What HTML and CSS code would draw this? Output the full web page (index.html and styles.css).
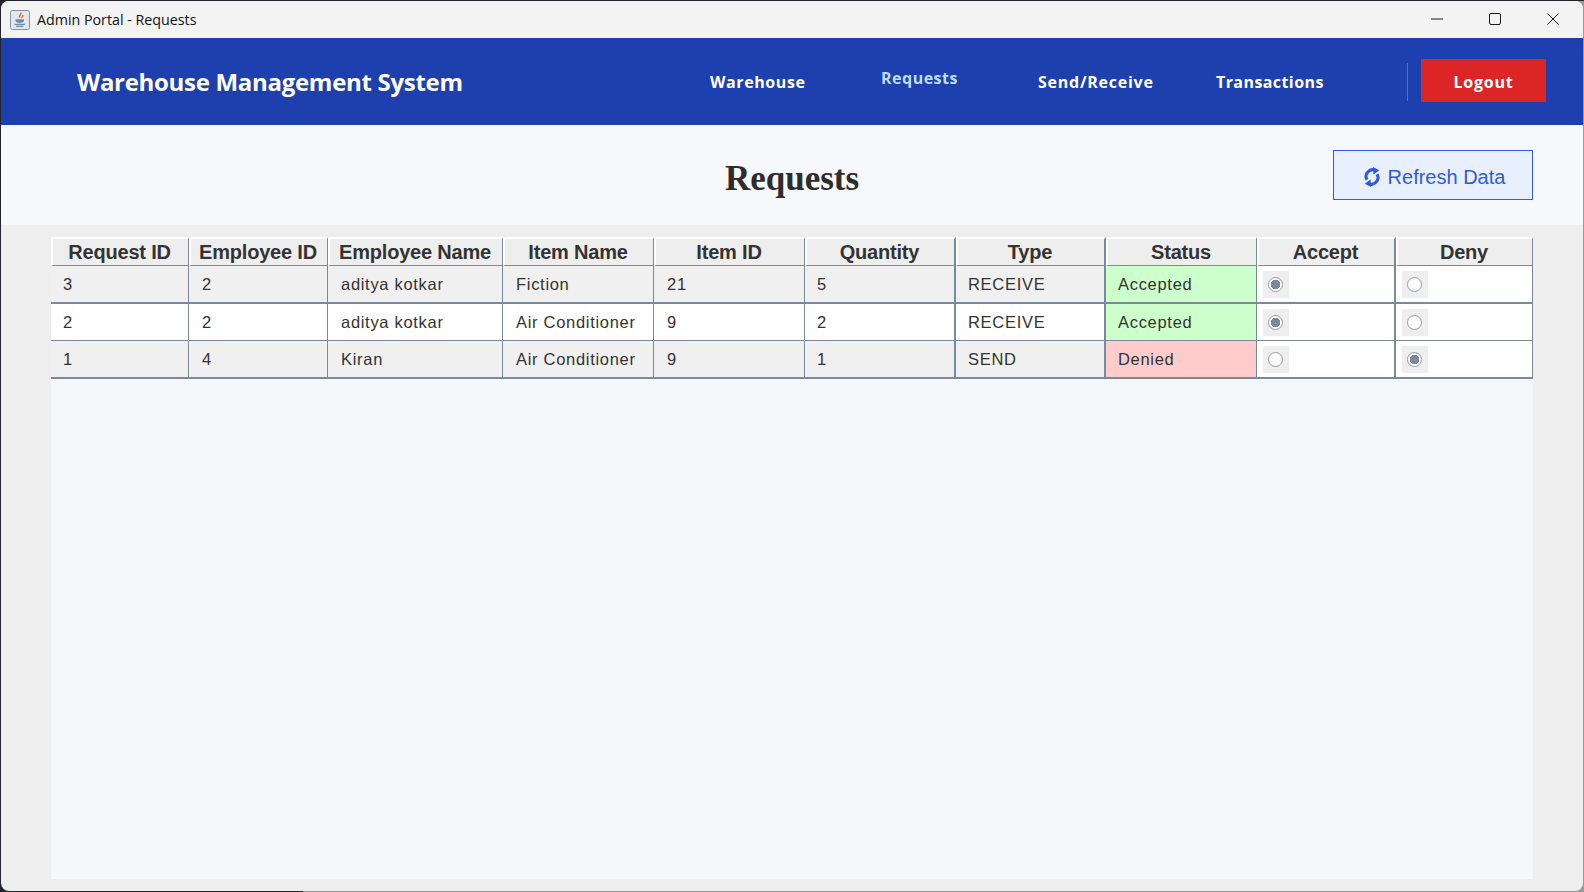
FILE: index.html
```html
<!DOCTYPE html>
<html lang="en">
<head>
<meta charset="utf-8">
<title>Admin Portal - Requests</title>
<link rel="stylesheet" href="styles.css">
</head>
<body>
<div class="window">
  <div class="titlebar">
    <svg class="app-icon" viewBox="0 0 20 20" width="20" height="20">
      <rect x="0.5" y="0.5" width="19" height="19" rx="2" fill="#e2e7ec" stroke="#7f94a8"/>
      <path d="M10.8 2.5c1.2 1.8-2.4 2.8-1.2 5.2M12.8 5c.6 1.2-1.4 1.6-.8 2.9" fill="none" stroke="#e2702a" stroke-width="1.6"/>
      <path d="M5.5 9.2h8.5v1.4c0 1.5-1.7 2.3-4.2 2.3s-4.3-.8-4.3-2.3z" fill="#6f8ba6"/>
      <path d="M4.5 14.3h10.5M6 16.3h7.5" stroke="#6f8ba6" stroke-width="1.2"/>
    </svg>
    <span class="title-text">Admin Portal - Requests</span>
    <div class="win-controls">
      <svg class="win-btn" viewBox="0 0 12 12" width="12" height="12"><path d="M0 6h12" stroke="#1a1a1a" fill="none"/></svg>
      <svg class="win-btn" viewBox="0 0 12 12" width="12" height="12"><rect x="0.5" y="0.5" width="11" height="11" rx="1.5" stroke="#1a1a1a" fill="none"/></svg>
      <svg class="win-btn" viewBox="0 0 12 12" width="12" height="12"><path d="M0.5 0.5l11 11M11.5 0.5l-11 11" stroke="#1a1a1a" fill="none"/></svg>
    </div>
  </div>

  <header class="appbar">
    <div class="brand">Warehouse Management System</div>
    <nav class="nav">
      <a class="nav-link nav-warehouse">Warehouse</a>
      <a class="nav-link nav-requests">Requests</a>
      <a class="nav-link nav-send">Send/Receive</a>
      <a class="nav-link nav-trans">Transactions</a>
    </nav>
    <div class="divider"></div>
    <button class="logout">Logout</button>
  </header>

  <div class="page-head">
    <h1 class="page-title">Requests</h1>
    <button class="refresh">
      <svg class="refresh-icon" viewBox="0 0 16 20" width="16" height="20">
        <path d="M12.4 4A6.6 6.6 0 0 0 3 12.8" fill="none" stroke="#2f5be0" stroke-width="3"/>
        <path d="M3.6 16A6.6 6.6 0 0 0 13 7.2" fill="none" stroke="#2f5be0" stroke-width="3"/>
        <path d="M9 0l0.5 7.5 5.8-4.2z" fill="#2f5be0"/>
        <path d="M7 20l-0.5-7.5-5.8 4.2z" fill="#2f5be0"/>
      </svg>
      <span>Refresh Data</span>
    </button>
  </div>

  <main class="content">
    <div class="table-panel">
      <table class="grid">
        <colgroup>
          <col class="c1"><col class="c2"><col class="c3"><col class="c4"><col class="c5">
          <col class="c6"><col class="c7"><col class="c8"><col class="c9"><col class="c10">
        </colgroup>
        <thead>
          <tr>
            <th>Request ID</th><th>Employee ID</th><th>Employee Name</th><th>Item Name</th><th>Item ID</th>
            <th class="thick">Quantity</th><th class="thick">Type</th><th>Status</th><th class="thick">Accept</th><th>Deny</th>
          </tr>
        </thead>
        <tbody>
          <tr class="row row-a row-thick">
            <td>3</td><td>2</td><td>aditya kotkar</td><td>Fiction</td><td>21</td><td class="thick">5</td><td class="thick">RECEIVE</td>
            <td class="ok">Accepted</td>
            <td class="white thick"><span class="radio-box"><span class="radio on"></span></span></td>
            <td class="white"><span class="radio-box"><span class="radio"></span></span></td>
          </tr>
          <tr class="row row-b">
            <td>2</td><td>2</td><td>aditya kotkar</td><td>Air Conditioner</td><td>9</td><td class="thick">2</td><td class="thick">RECEIVE</td>
            <td class="ok">Accepted</td>
            <td class="white thick"><span class="radio-box"><span class="radio on"></span></span></td>
            <td class="white"><span class="radio-box"><span class="radio"></span></span></td>
          </tr>
          <tr class="row row-a row-last">
            <td>1</td><td>4</td><td>Kiran</td><td>Air Conditioner</td><td>9</td><td class="thick">1</td><td class="thick">SEND</td>
            <td class="no">Denied</td>
            <td class="white thick"><span class="radio-box"><span class="radio"></span></span></td>
            <td class="white"><span class="radio-box"><span class="radio on"></span></span></td>
          </tr>
        </tbody>
      </table>
    </div>
  </main>
</div>
</body>
</html>
```
FILE: styles.css
```css
* { box-sizing: border-box; }
html, body { margin: 0; height: 100%; overflow: hidden; }
body {
  padding: 1px;
  background:
    linear-gradient(#23232b 0 1px, transparent 1px),
    linear-gradient(to right, #23232b 303px, #999999 303px);
}

.window {
  height: 890px;
  display: flex;
  flex-direction: column;
  background: #eeeeee;
  border-radius: 8px;
  overflow: hidden;
}

.titlebar {
  height: 37px;
  flex: none;
  display: flex;
  align-items: center;
  padding-left: 9px;
  background: #f3f3f3;
}
.app-icon { flex: none; }
.title-text {
  margin-left: 7px;
  font: 14.25px "Open Sans", "Noto Sans", sans-serif;
  color: #111;
}
.win-controls {
  margin-left: auto;
  display: flex;
  align-items: center;
  gap: 46px;
  padding: 0 24px 2px 0;
}
.win-btn { display: block; }

.appbar {
  height: 87px;
  flex: none;
  display: flex;
  align-items: center;
  background: #1e40af;
  padding-left: 76px;
  color: #fff;
}
.brand {
  font: 700 24px "Open Sans", "Noto Sans", sans-serif;
  letter-spacing: -0.3px;
  width: 633px;
}
.nav { display: flex; width: 705px; }
.nav-link {
  font: 700 16px "Open Sans", "Noto Sans", sans-serif;
  letter-spacing: 0.6px;
  color: #fff;
}
.nav-warehouse { width: 171px; }
.nav-requests { width: 157px; color: #bfdbfe; position: relative; top: -4px; letter-spacing: 0.5px; }
.nav-send { width: 178px; letter-spacing: 0.75px; }
.nav-trans { width: 180px; letter-spacing: 0.42px; }
.divider { width: 1px; height: 38px; background: #64748b; margin-left: -8px; }
.logout {
  margin: -2px 0 0 13px;
  width: 125px;
  height: 43px;
  border: 0;
  background: #dc2626;
  color: #fff;
  font: 700 16px "Open Sans", "Noto Sans", sans-serif;
  letter-spacing: 0.8px;
  padding: 2px 0 0;
}

.page-head {
  height: 100px;
  flex: none;
  position: relative;
  display: flex;
  align-items: center;
  justify-content: center;
  background: #f7f8fc;
}
.page-title {
  margin: 8px 0 0;
  font: 700 35px "Liberation Serif", serif;
  color: #2d2d2d;
}
.refresh {
  position: absolute;
  right: 50px;
  top: 25px;
  width: 200px;
  height: 50px;
  display: flex;
  align-items: center;
  justify-content: center;
  gap: 8px;
  background: #e9f0fd;
  border: 1px solid #2f5be0;
  color: #2f5be0;
  font: 20px "Liberation Sans", sans-serif;
  padding: 5px 0 0 3px;
}
.refresh-icon { display: block; margin-bottom: 2px; }

.content { flex: 1; padding: 12px 50px 12px 50px; }
.table-panel { height: 100%; background: #f5f7fb; }

.grid {
  width: 1482px;
  table-layout: fixed;
  border-collapse: separate;
  border-spacing: 0;
  font-family: "Liberation Sans", sans-serif;
  color: #333;
}
.c1 { width: 138px; } .c2 { width: 139px; } .c3 { width: 175px; } .c4 { width: 151px; }
.c5 { width: 151px; } .c6 { width: 151px; } .c7 { width: 150px; } .c8 { width: 151px; }
.c9 { width: 139px; } .c10 { width: 137px; }

th {
  height: 29px;
  padding: 0 2px 0 0;
  font-size: 20px;
  font-weight: 700;
  letter-spacing: -0.2px;
  text-align: center;
  background: #eeeeee;
  border-top: 2px solid #fff;
  border-left: 2px solid #fff;
  border-right: 1px solid #7a8a9c;
  border-bottom: 1px solid #7a8a9c;
}
th.thick { border-right-width: 2px; }

td {
  padding: 0 0 0 12px;
  font-size: 16.5px;
  letter-spacing: 0.7px;
  border-right: 1px solid #7a8a9c;
  border-bottom: 1px solid #7a8a9c;
  white-space: nowrap;
}
td:nth-child(n+2):nth-child(-n+5) { padding-left: 13px; }
td.thick { border-right-width: 2px; }
.row td { height: 37px; }
.row-thick td { border-bottom-width: 2px; height: 38px; }
.row-last td { border-bottom-width: 2px; height: 38px; }
.row-a td { background: #f0f0f0; }
.row-b td { background: #fff; }
.row td.ok { background: #ccffcc; }
.row td.no { background: #ffcccc; }
.row td.white { background: #fff; padding-left: 6px; }

.radio-box {
  display: flex;
  align-items: center;
  padding-left: 5px;
  width: 26px;
  height: 27px;
  background: #eeeeee;
}
.radio {
  width: 15px;
  height: 15px;
  border-radius: 50%;
  border: 1px solid #9a9a9a;
  background: #fff;
}
.radio.on {
  background: radial-gradient(circle, #7a8a9c 0 4.5px, #fff 5px);
}
```
